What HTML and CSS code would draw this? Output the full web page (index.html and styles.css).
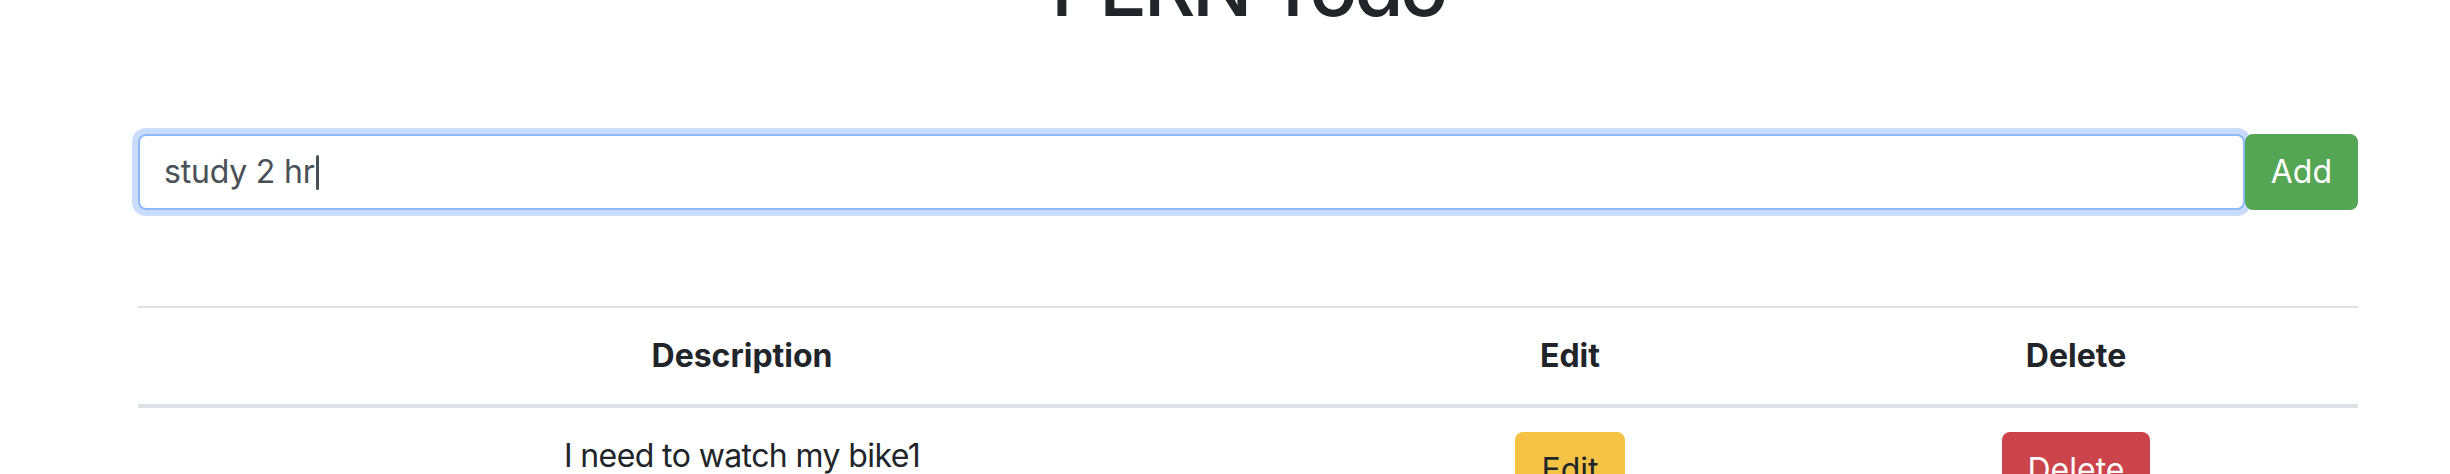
FILE: index.html
```html
<!DOCTYPE html>
<html lang="en">
<head>
<meta charset="utf-8">
<title>PERN Todo</title>
<link rel="stylesheet" href="styles.css">
</head>
<body>
<div class="container">
  <h1 class="title">PERN Todo</h1>
  <form class="todo-form">
    <div class="form-control"><span class="typed">study 2 hr</span><span class="caret"></span></div>
    <button type="button" class="btn btn-success">Add</button>
  </form>
  <table class="table">
    <colgroup>
      <col class="col-desc">
      <col class="col-edit">
      <col class="col-delete">
    </colgroup>
    <thead>
      <tr>
        <th>Description</th>
        <th>Edit</th>
        <th>Delete</th>
      </tr>
    </thead>
    <tbody>
      <tr>
        <td class="desc">I need to watch my bike1</td>
        <td><button type="button" class="btn btn-warning">Edit</button></td>
        <td><button type="button" class="btn btn-danger">Delete</button></td>
      </tr>
    </tbody>
  </table>
</div>
</body>
</html>
```

FILE: styles.css
```css
html, body {
  margin: 0;
  padding: 0;
  background: #ffffff;
  overflow: hidden;
}

body {
  font-family: "Inter", "Noto Sans", sans-serif;
  color: #212529;
  font-size: 32px;
  line-height: 48px;
}

.container {
  width: 2220px;
  margin-left: 138px;
}

.title {
  margin: -64px 0 16px;
  font-size: 80px;
  line-height: 102px;
  font-weight: 500;
  letter-spacing: -3.5px;
  text-align: center;
}

.todo-form {
  display: flex;
  margin-top: 96px;
}

.form-control {
  flex: 1;
  box-sizing: border-box;
  height: 76px;
  padding: 12px 24px;
  border: 2px solid #8cbaf7;
  border-radius: 8px;
  box-shadow: 0 0 0 6px #cadcfb;
  color: #495057;
  display: flex;
  align-items: center;
  background: #fff;
}

.typed {
  letter-spacing: -0.2px;
}

.caret {
  display: inline-block;
  width: 3px;
  height: 35px;
  margin-left: 1px;
  background: #495057;
  border-radius: 2px;
}

.btn {
  font-family: inherit;
  font-size: 32px;
  line-height: 48px;
  padding: 12px 24px;
  border: 2px solid transparent;
  border-radius: 8px;
  cursor: pointer;
}

.btn-success {
  background: #54a655;
  border-color: #54a655;
  color: #fff;
}

.btn-warning {
  background: #f4c344;
  border-color: #f4c344;
  color: #212529;
}

.btn-danger {
  background: #cc444b;
  border-color: #cc444b;
  color: #fff;
}

.table {
  width: 100%;
  margin-top: 96px;
  border-collapse: collapse;
}

.col-desc { width: 1208px; }
.col-edit { width: 448px; }
.col-delete { width: 564px; }

.table th,
.table td {
  padding: 24px;
  border-top: 2px solid #dee2e6;
  text-align: center;
  vertical-align: top;
}

.table thead th {
  font-weight: 700;
  vertical-align: bottom;
  border-bottom: 4px solid #dee2e6;
}

.table td.desc {
  letter-spacing: -0.6px;
}
```
